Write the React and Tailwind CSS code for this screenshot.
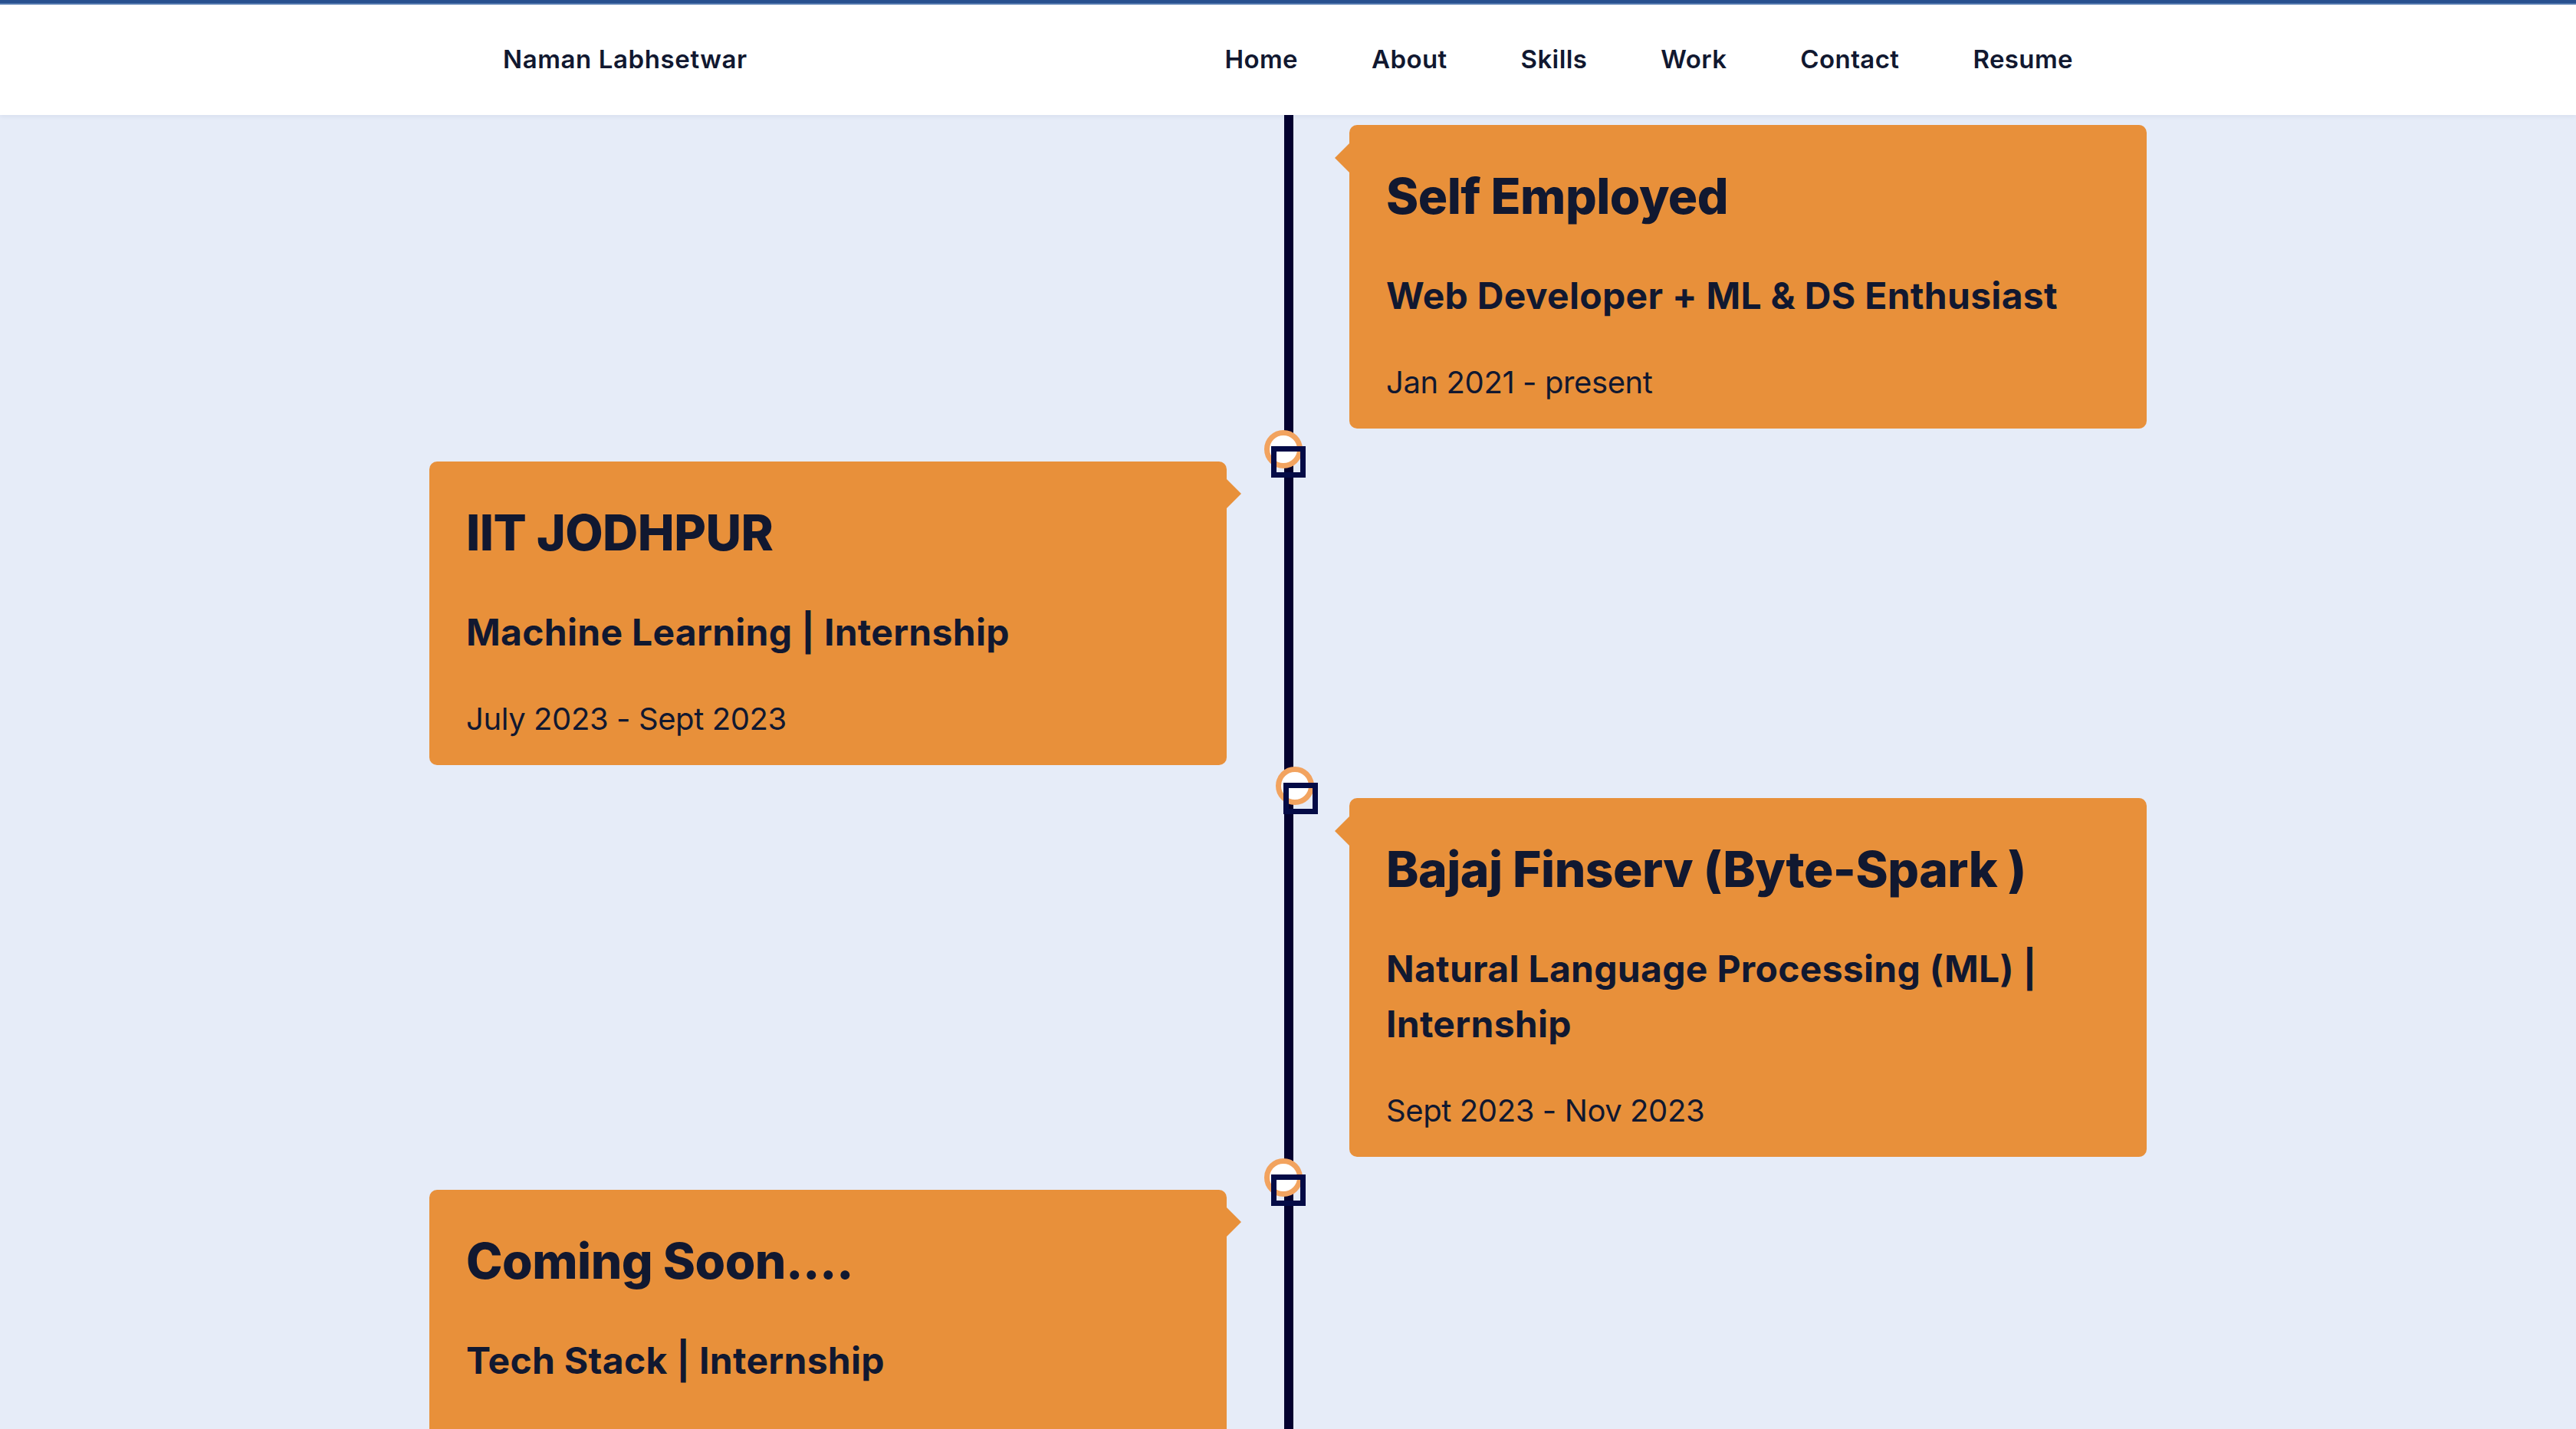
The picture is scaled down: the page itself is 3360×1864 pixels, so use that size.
import React from "react";

const items = [
  {
    side: "right",
    title: "Self Employed",
    sub: "Web Developer + ML & DS Enthusiast",
    date: "Jan 2021 - present",
    marker: null,
  },
  {
    side: "left",
    title: "IIT JODHPUR",
    sub: "Machine Learning | Internship",
    date: "July 2023 - Sept 2023",
    marker: "a",
  },
  {
    side: "right",
    title: "Bajaj Finserv (Byte-Spark )",
    sub: "Natural Language Processing (ML) | Internship",
    date: "Sept 2023 - Nov 2023",
    marker: "b",
  },
  {
    side: "left",
    title: "Coming Soon....",
    sub: "Tech Stack | Internship",
    date: "Soon",
    marker: "a",
  },
];

function Marker({ variant }) {
  if (!variant) return null;
  const shifted = variant === "b";
  return (
    <>
      <div
        className={
          "absolute top-[-41px] h-[50px] w-[50px] rounded-full border-[7px] border-[#f2a35f] bg-white z-10 " +
          (shifted ? "left-[1104px]" : "left-[1089px]")
        }
      />
      <div
        className={
          "absolute top-[-20px] h-[41px] w-[45px] border-[7px] border-[#040b46] z-20 " +
          (shifted ? "left-[1114px]" : "left-[1098px]")
        }
      />
    </>
  );
}

function Card({ item }) {
  const right = item.side === "right";
  return (
    <div className={"relative flex " + (right ? "justify-end" : "justify-start")}>
      <Marker variant={item.marker} />
      <div className="relative w-[1040px] rounded-[10px] bg-[#e8903a] px-12 pt-[54px] pb-[30px] text-[#111830]">
        {right ? (
          <div className="absolute left-[-19px] top-[23px] h-0 w-0 border-y-[20px] border-y-transparent border-r-[20px] border-r-[#e8903a]" />
        ) : (
          <div className="absolute right-[-19px] top-[22px] h-0 w-0 border-y-[20px] border-y-transparent border-l-[20px] border-l-[#e8903a]" />
        )}
        <h3 className="text-[64px] leading-[77px] font-extrabold tracking-[-0.5px]">{item.title}</h3>
        <h4 className="mt-[56px] text-[48px] leading-[72px] font-bold tracking-[0.3px]">{item.sub}</h4>
        <p className="mt-[47px] text-[40px] leading-[60px] font-normal tracking-[-0.4px]">{item.date}</p>
      </div>
    </div>
  );
}

export default function App() {
  return (
    <div className="h-[1864px] overflow-hidden bg-[#e6ecf8] font-['Inter','Liberation_Sans',sans-serif] text-[#111830]">
      <header className="relative z-30 bg-white shadow-[0_2px_6px_rgba(40,60,120,0.08)]">
        <div className="h-[4px] bg-[#28508f]" />
        <div className="h-[2px] bg-[#5278ad]" />
        <div className="mx-auto flex h-[144px] w-[2048px] items-center justify-between">
          <div className="text-[33px] font-semibold tracking-[0.6px]">Naman Labhsetwar</div>
          <nav className="flex items-center gap-[96px] text-[33px] font-semibold tracking-[0.4px]">
            <a>Home</a>
            <a>About</a>
            <a>Skills</a>
            <a>Work</a>
            <a>Contact</a>
            <a>Resume</a>
          </nav>
        </div>
      </header>
      <main className="relative mx-auto w-[2240px] pt-[13px]">
        <div className="absolute left-[1115px] top-0 h-[2000px] w-[12px] bg-[#03012f]" />
        <div className="flex flex-col gap-[43px]">
          {items.map((it, i) => (
            <Card key={i} item={it} />
          ))}
        </div>
      </main>
    </div>
  );
}
